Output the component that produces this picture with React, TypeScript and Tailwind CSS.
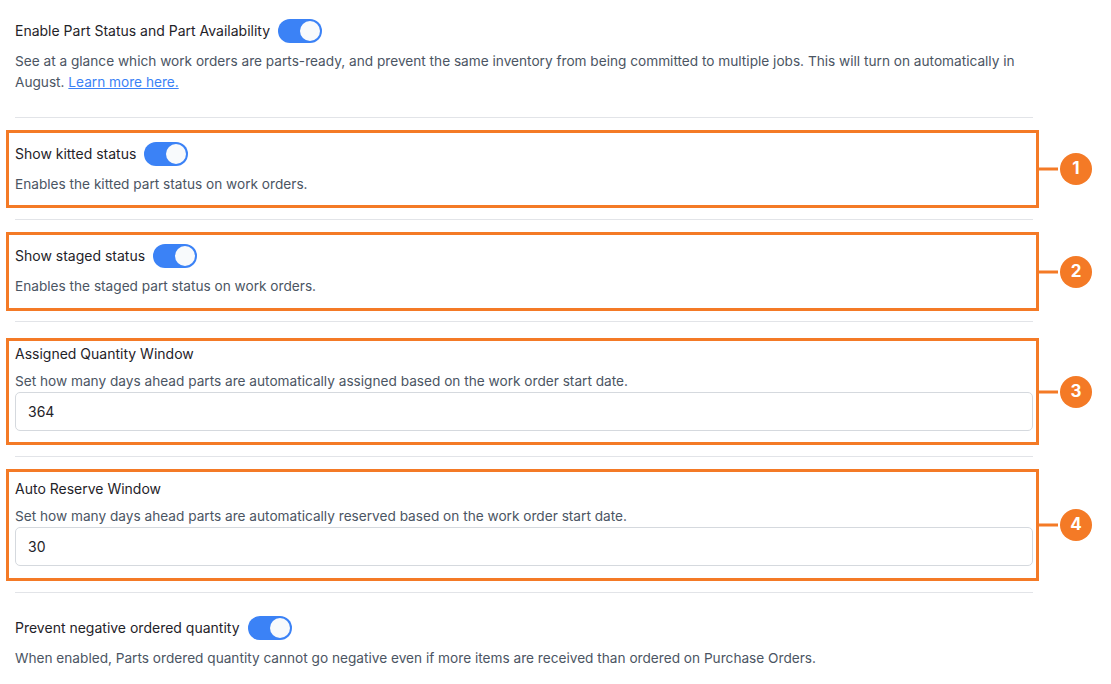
import React from 'react';

const font = { fontFamily: 'Inter, "Noto Sans", sans-serif' };

const Toggle: React.FC = () => (
  <div className="relative w-[44px] h-6 rounded-full bg-[#3b82f6] shrink-0">
    <div className="absolute right-[2px] top-[2px] w-5 h-5 rounded-full bg-[#f8fafc]" />
  </div>
);

const Marker: React.FC<{ n: number }> = ({ n }) => (
  <>
    <div className="absolute left-full top-1/2 -translate-y-1/2 w-[22px] h-[3px] bg-[#f47a26]" />
    <div className="absolute right-[-56px] top-1/2 -translate-y-1/2 w-8 h-8 rounded-full bg-[#f47a26] flex items-center justify-center text-white text-[17px] font-bold">
      {n}
    </div>
  </>
);

const Divider: React.FC<{ className?: string }> = ({ className }) => (
  <div className={`h-px bg-[#e2e4e8] ${className ?? ''}`} />
);

const ToggleRow: React.FC<{ title: string }> = ({ title }) => (
  <div className="flex items-center gap-2 h-6">
    <span className="text-sm leading-5 text-[#1f2329]">{title}</span>
    <Toggle />
  </div>
);

const Desc: React.FC<{ children: React.ReactNode; className?: string }> = ({ children, className }) => (
  <p className={`text-[13.65px] leading-[21px] text-[#4b5563] ${className ?? ''}`}>{children}</p>
);

const NumInput: React.FC<{ value: string }> = ({ value }) => (
  <div className="h-[39px] border border-[#d5d9de] rounded-[5px] flex items-center pl-3 text-sm text-[#1f2329]">
    {value}
  </div>
);

export default function App() {
  return (
    <div className="w-full h-[684px] bg-white overflow-hidden" style={font}>
      <div className="w-[1018px] ml-[15px] pt-[19px]">
        <ToggleRow title="Enable Part Status and Part Availability" />
        <Desc className="mt-2">
          See at a glance which work orders are parts-ready, and prevent the same inventory from being committed to multiple jobs. This will turn on automatically in August.{' '}
          <a href="#" className="text-[#3b82f6] underline">Learn more here.</a>
        </Desc>

        <Divider className="mt-6" />

        <div className="relative mt-3 ml-[-9px] mr-[-6px] border-[3px] border-[#f47a26] pl-[6px] pr-[3px] pt-[9px] pb-[10px]">
          <ToggleRow title="Show kitted status" />
          <Desc className="mt-2">Enables the kitted part status on work orders.</Desc>
          <Marker n={1} />
        </div>

        <Divider className="mt-[11px]" />

        <div className="relative mt-3 ml-[-9px] mr-[-6px] border-[3px] border-[#f47a26] pl-[6px] pr-[3px] pt-[9px] pb-[11px]">
          <ToggleRow title="Show staged status" />
          <Desc className="mt-2">Enables the staged part status on work orders.</Desc>
          <Marker n={2} />
        </div>

        <Divider className="mt-[10px]" />

        <div className="relative mt-4 ml-[-9px] mr-[-6px] border-[3px] border-[#f47a26] pl-[6px] pr-[3px] pt-[3px] pb-[11px]">
          <div className="text-sm leading-5 text-[#1f2329]">Assigned Quantity Window</div>
          <Desc className="mt-[7px]">Set how many days ahead parts are automatically assigned based on the work order start date.</Desc>
          <NumInput value="364" />
          <Marker n={3} />
        </div>

        <Divider className="mt-[11px]" />

        <div className="relative mt-3 ml-[-9px] mr-[-6px] border-[3px] border-[#f47a26] pl-[6px] pr-[3px] pt-[7px] pb-[12px]">
          <div className="text-sm leading-5 text-[#1f2329]">Auto Reserve Window</div>
          <Desc className="mt-[7px]">Set how many days ahead parts are automatically reserved based on the work order start date.</Desc>
          <NumInput value="30" />
          <Marker n={4} />
        </div>

        <Divider className="mt-[11px]" />

        <div className="mt-[23px]">
          <ToggleRow title="Prevent negative ordered quantity" />
          <Desc className="mt-2">When enabled, Parts ordered quantity cannot go negative even if more items are received than ordered on Purchase Orders.</Desc>
        </div>
      </div>
    </div>
  );
}
